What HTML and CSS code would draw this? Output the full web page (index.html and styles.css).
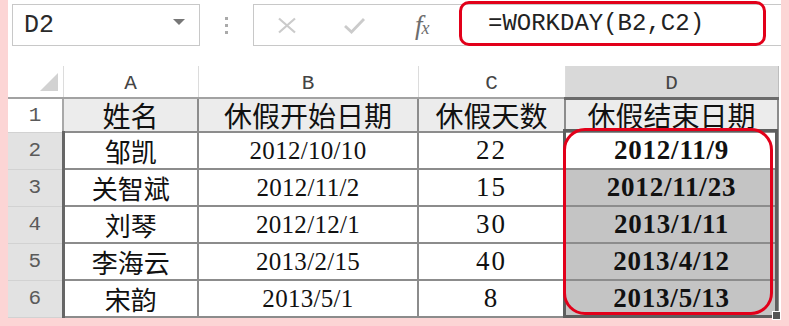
FILE: index.html
```html
<!DOCTYPE html>
<html lang="zh-CN">
<head>
<meta charset="utf-8">
<title>WORKDAY</title>
<link rel="stylesheet" href="styles.css">
</head>
<body>
<div class="app">
  <div class="toolbar">
    <div class="namebox"><span class="name">D2</span><span class="caret"></span></div>
    <div class="grip"><i></i><i></i><i></i></div>
    <div class="fbar">
      <svg class="ic ic-x" width="22" height="17" viewBox="0 0 22 17"><path d="M3 1.5 L19 15.5 M19 1.5 L3 15.5" stroke="#cbcbcb" stroke-width="2.2" fill="none"/></svg>
      <svg class="ic ic-ok" width="23" height="17" viewBox="0 0 23 17"><path d="M2 9 L8.5 15 L21 2" stroke="#cbcbcb" stroke-width="2.8" fill="none"/></svg>
      <span class="fx"><span class="fx-f">f</span><span class="fx-x">x</span></span>
      <div class="finput">=WORKDAY(B2,C2)</div>
    </div>
  </div>
  <div class="sheet-wrap">
    <table class="sheet">
      <colgroup>
        <col class="c-rh"><col class="c-a"><col class="c-b"><col class="c-c"><col class="c-d">
      </colgroup>
      <tr class="colhead">
        <th class="corner"><span class="tri"></span></th>
        <th>A</th><th>B</th><th>C</th><th class="hsel">D</th>
      </tr>
      <tr class="r1">
        <th class="rh">1</th>
        <td>姓名</td><td>休假开始日期</td><td>休假天数</td><td>休假结束日期</td>
      </tr>
      <tr class="row">
        <th class="rh rsel">2</th>
        <td class="nm">邹凯</td><td class="dt">2012/10/10</td><td class="num">22</td><td class="res active">2012/11/9</td>
      </tr>
      <tr class="row">
        <th class="rh rsel">3</th>
        <td class="nm">关智斌</td><td class="dt">2012/11/2</td><td class="num">15</td><td class="res">2012/11/23</td>
      </tr>
      <tr class="row">
        <th class="rh rsel">4</th>
        <td class="nm">刘琴</td><td class="dt">2012/12/1</td><td class="num">30</td><td class="res">2013/1/11</td>
      </tr>
      <tr class="row">
        <th class="rh rsel">5</th>
        <td class="nm">李海云</td><td class="dt">2013/2/15</td><td class="num">40</td><td class="res">2013/4/12</td>
      </tr>
      <tr class="row">
        <th class="rh rsel">6</th>
        <td class="nm">宋韵</td><td class="dt">2013/5/1</td><td class="num">8</td><td class="res">2013/5/13</td>
      </tr>
    </table>
    <div class="sel-range"></div>
    <div class="fill-handle"></div>
    <div class="highlight"></div>
  </div>
</div>
</body>
</html>
```
FILE: styles.css
```css
html, body {
  margin: 0;
  padding: 0;
}
body {
  background: #fcd5d5;
  width: 789px;
  height: 326px;
  overflow: hidden;
}
.app {
  margin-left: 8px;
  width: 773px;
  height: 318px;
  background: #fff;
}
.toolbar {
  display: flex;
  height: 42px;
  padding-top: 4px;
  padding-left: 4px;
}
.namebox {
  width: 188px;
  box-sizing: border-box;
  border: 1px solid #c8c8c8;
  display: flex;
  align-items: center;
  justify-content: space-between;
  padding: 0 14px 0 11px;
}
.name {
  font: 25px/1 "Liberation Mono", monospace;
  color: #2a2a2a;
}
.caret {
  width: 0;
  height: 0;
  border-left: 6px solid transparent;
  border-right: 6px solid transparent;
  border-top: 6px solid #777;
  margin-top: -6px;
}
.grip {
  width: 53px;
  display: flex;
  flex-direction: column;
  align-items: center;
  justify-content: center;
  gap: 4px;
}
.grip i {
  display: block;
  width: 3px;
  height: 3px;
  background: #aaa;
}
.fbar {
  flex: 1;
  display: flex;
  align-items: center;
  box-sizing: border-box;
  border: 1px solid #c8c8c8;
  border-right: none;
}
.ic { display: block; flex: none; }
.ic-x { margin-left: 22px; }
.ic-ok { margin-left: 45px; }
.fx {
  margin-left: 49px;
  width: 24px;
  font-family: "Liberation Serif", serif;
  font-style: italic;
  color: #6d6d6d;
  line-height: 1;
  white-space: nowrap;
}
.fx-f { font-size: 27px; }
.fx-x { font-size: 18px; margin-left: -1px; }
.finput {
  align-self: stretch;
  margin: -4px 0 -1px 20px;
  width: 307px;
  box-sizing: border-box;
  border: 3px solid #e2001a;
  border-radius: 10px;
  padding-left: 26px;
  display: flex;
  align-items: center;
  font: 24px/1 "Liberation Mono", monospace;
  color: #222;
}
.sheet-wrap {
  position: relative;
  margin-top: 20px;
}
.sheet {
  border-collapse: collapse;
  table-layout: fixed;
  width: 770px;
}
.c-rh { width: 55px; }
.c-a { width: 135px; }
.c-b { width: 220px; }
.c-c { width: 147px; }
.c-d { width: 213px; }
.sheet th, .sheet td {
  padding: 0;
  text-align: center;
  white-space: nowrap;
}
.colhead th {
  height: 32px;
  box-sizing: border-box;
  font: 21px/1 "Liberation Mono", monospace;
  font-weight: normal;
  color: #444;
  background: #fff;
  border-left: 1px solid #dcdcdc;
  border-right: 1px solid #dcdcdc;
  border-bottom: 2px solid #a2a2a2;
  vertical-align: bottom;
  padding-bottom: 3px;
}
.colhead th.corner {
  border-left: none;
  position: relative;
}
.tri {
  position: absolute;
  right: 5px;
  bottom: 6px;
  width: 0;
  height: 0;
  border-left: 18px solid transparent;
  border-bottom: 18px solid #d2d2d2;
}
.colhead th.hsel {
  background: #d9d9d9;
  border-bottom: 3px solid #6b6b6b;
  border-right: 1px solid #bdbdbd;
}
.rh {
  font: 21px/1 "Liberation Mono", monospace;
  font-weight: normal;
  color: #5a5a5a;
  background: #fff;
  border-bottom: 1px solid #d2d2d2;
  border-right: 2px solid #a8a8a8;
  vertical-align: middle;
}
.rh.rsel {
  background: #e2e2e2;
  border-right: 3px solid #666;
}
.r1 td {
  height: 34px;
  box-sizing: border-box;
  background: #ececec;
  border: 2px solid #8c8c8c;
  border-top: none;
  font: 28px/28px "Noto Sans CJK SC", sans-serif;
  color: #111;
  vertical-align: bottom;
  padding: 0 0 2px;
}
.row td, .row th {
  height: 37px;
  box-sizing: border-box;
}
.row td {
  border: 2px solid #8c8c8c;
  vertical-align: middle;
  color: #111;
}
.nm {
  font: 26px/1 "Noto Sans CJK SC", sans-serif;
}
.dt {
  font: 25px/1 "Liberation Serif", serif;
  letter-spacing: 0.3px;
  color: #222;
}
.num {
  font: 27px/1 "Liberation Serif", serif;
  letter-spacing: 2px;
}
.res {
  font: bold 27px/1 "Liberation Serif", serif;
  letter-spacing: 0.8px;
  background: #c4c4c4;
}
.res.active {
  background: #fff;
}
.sel-range {
  position: absolute;
  left: 555px;
  top: 63px;
  width: 215px;
  height: 189px;
  box-sizing: border-box;
  border: 3px solid #5e5e5e;
}
.fill-handle {
  position: absolute;
  left: 764px;
  top: 245px;
  width: 9px;
  height: 9px;
  box-sizing: border-box;
  background: #555;
  border: 1px solid #fff;
}
.highlight {
  position: absolute;
  left: 555px;
  top: 62px;
  width: 210px;
  height: 187px;
  box-sizing: border-box;
  border: 3px solid #e2001a;
  border-radius: 22px;
}
```
